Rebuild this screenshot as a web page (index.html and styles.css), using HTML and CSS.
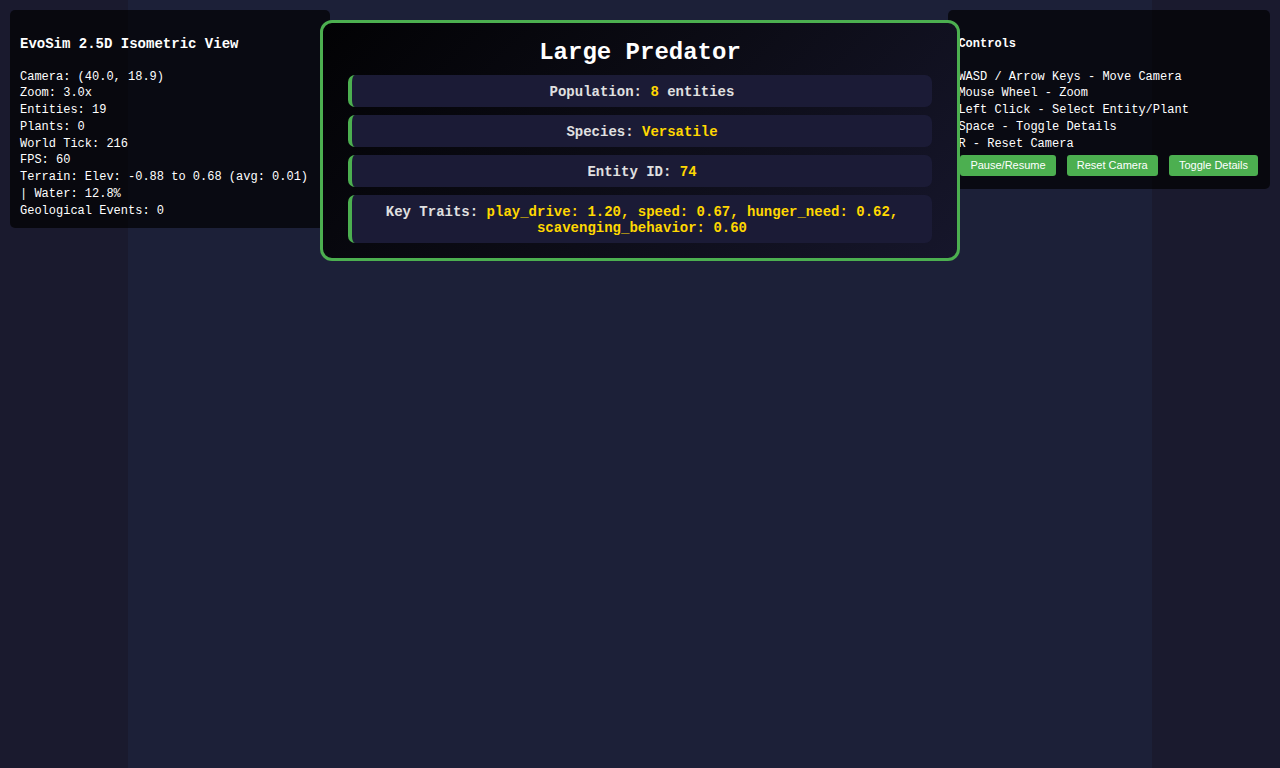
FILE: index.html
```html
<!DOCTYPE html>
<html lang="en">
<head>
<meta charset="utf-8">
<title>EvoSim 2.5D Isometric View</title>
<link rel="stylesheet" href="styles.css">
</head>
<body>
<div class="stage">
  <div class="world"></div>
</div>

<div class="panel info-panel">
  <h3 class="panel-title">EvoSim 2.5D Isometric View</h3>
  <div class="lines">
    <div>Camera: (40.0, 18.9)</div>
    <div>Zoom: 3.0x</div>
    <div>Entities: 19</div>
    <div>Plants: 0</div>
    <div>World Tick: 216</div>
    <div>FPS: 60</div>
    <div>Terrain: Elev: -0.88 to 0.68 (avg: 0.01) | Water: 12.8%</div>
    <div>Geological Events: 0</div>
  </div>
</div>

<div class="panel controls-panel">
  <div class="controls-title">Controls</div>
  <div class="lines">
    <div>WASD / Arrow Keys - Move Camera</div>
    <div>Mouse Wheel - Zoom</div>
    <div>Left Click - Select Entity/Plant</div>
    <div>Space - Toggle Details</div>
    <div>R - Reset Camera</div>
  </div>
  <div class="buttons">
    <button class="btn">Pause/Resume</button>
    <button class="btn">Reset Camera</button>
    <button class="btn">Toggle Details</button>
  </div>
</div>

<div class="details">
  <h2 class="details-title">Large Predator</h2>
  <div class="stat">Population: <span class="val">8</span> entities</div>
  <div class="stat">Species: <span class="val">Versatile</span></div>
  <div class="stat">Entity ID: <span class="val">74</span></div>
  <div class="stat">Key Traits: <span class="val">play_drive: 1.20, speed: 0.67, hunger_need: 0.62, scavenging_behavior: 0.60</span></div>
</div>
</body>
</html>
```

FILE: styles.css
```css
html, body {
  margin: 0;
  padding: 0;
  height: 100%;
}

body {
  background: #1a1a2e;
  overflow: hidden;
  font-family: "Liberation Mono", "DejaVu Sans Mono", monospace;
  color: #ffffff;
  position: relative;
}

.stage {
  display: flex;
  justify-content: center;
  height: 768px;
}

.world {
  width: 1024px;
  height: 768px;
  background: #1c2038;
}

.panel {
  position: absolute;
  top: 10px;
  background: rgba(0, 0, 0, 0.68);
  border-radius: 5px;
  padding: 10px;
  font-size: 12px;
  line-height: 16.8px;
}

.info-panel {
  left: 10px;
  width: 300px;
  padding-bottom: 8.5px;
}

.panel-title {
  margin: 14px 0 14.5px;
  font-size: 14px;
  line-height: 20px;
  font-weight: bold;
}

.controls-panel {
  right: 10px;
  width: max-content;
  padding-bottom: 10px;
}

.controls-title {
  font-weight: bold;
  margin: 15.6px 0 16.2px;
}

.buttons {
  display: flex;
  gap: 11.2px;
  margin: 2.6px 2px 2.7px;
}

.btn {
  font-family: "Liberation Sans", Arial, sans-serif;
  font-size: 11px;
  line-height: 13px;
  padding: 4px 10px 4.3px;
  border: none;
  border-radius: 3px;
  background: #4caf50;
  color: #ffffff;
}

.details {
  position: absolute;
  top: 20px;
  left: 320px;
  width: 584px;
  padding: 16px 25px 15px;
  border: 3px solid #4caf50;
  border-radius: 12px;
  background: linear-gradient(135deg, #020204 0%, #0c0c16 50%, #16162b 100%);
  font-weight: bold;
  font-size: 14px;
  line-height: 16px;
  text-align: center;
  color: #e0e0e0;
}

.details-title {
  margin: 0 0 8px;
  font-size: 24px;
  line-height: 28px;
  color: #ffffff;
}

.stat {
  background: #1b1b36;
  border-left: 4px solid #4caf50;
  border-radius: 7px;
  padding: 8.5px 10px 7.5px;
  margin-bottom: 8px;
}

.stat:last-child {
  margin-bottom: 0;
}

.val {
  color: #ffd700;
}
```
